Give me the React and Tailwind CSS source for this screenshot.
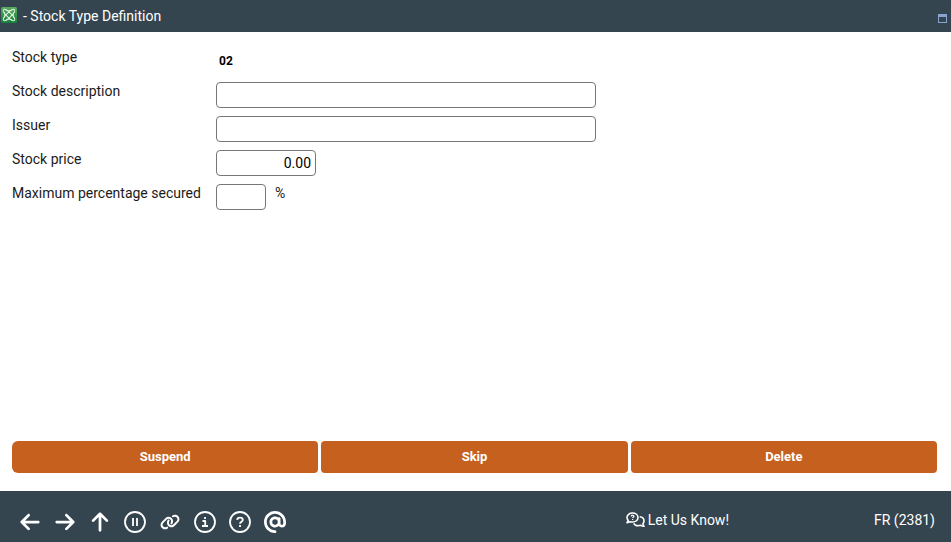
import React, { useState } from 'react';
import { FaArrowLeft, FaArrowRight, FaArrowUp, FaAt, FaLink } from 'react-icons/fa6';

const inputClass = 'block h-[26px] rounded border border-[#767676] bg-white px-1 text-sm text-black';
const labelClass = 'w-[204px] shrink-0 text-sm leading-[18px]';

const FormRow = ({ label, htmlFor, children }) => (
  <div className="flex h-[26px] items-start">
    <label htmlFor={htmlFor} className={labelClass}>{label}</label>
    {children}
  </div>
);

const LogoIcon = () => (
  <svg width="16" height="16" viewBox="0 0 16 16" fill="none" aria-hidden="true">
    <defs>
      <linearGradient id="logo-bg" x1="0" y1="0" x2="0" y2="1">
        <stop offset="0" stopColor="#5cab62" />
        <stop offset="1" stopColor="#15803a" />
      </linearGradient>
    </defs>
    <rect width="16" height="16" rx="1.5" fill="url(#logo-bg)" />
    <g stroke="#e2f4e2" strokeWidth="1">
      <ellipse cx="8" cy="8" rx="7.6" ry="2.2" transform="rotate(45 8 8)" />
      <ellipse cx="8" cy="8" rx="7.6" ry="2.2" transform="rotate(-45 8 8)" />
      <path d="M5 3q3 2 6 0M5 13q3-2 6 0M3 5q2 3 0 6M13 5q-2 3 0 6" />
    </g>
  </svg>
);

const WindowIcon = () => (
  <svg width="9" height="9" viewBox="0 0 9 9" aria-hidden="true">
    <path fill="#8ba3d3" fillRule="evenodd" d="M0 0h9v9H0zM1 3v5h7V3z" />
  </svg>
);

const ChatIcon = () => (
  <svg width="19" height="16" viewBox="0 0 19 16" fill="none" stroke="#fff" strokeWidth="1.6" strokeLinejoin="round" aria-hidden="true">
    <path d="M6.500 1C3.400 1 1 2.900 1 5.500c0 1.200.5 2.200 1.300 3L1 10.700c1.300 0 2.500-.4 3.300-1 .7.200 1.400.3 2.200.3 3.100 0 5.500-1.900 5.500-4.500S9.600 1 6.500 1z" />
    <path d="M13.700 4.800c2.500.2 4.300 1.900 4.300 4.200 0 1.200-.5 2.200-1.200 3l1.200 2.300c-1.300 0-2.400-.4-3.200-1-3 .8-6 0-7.100-2" />
    <path d="M5.200 4.300c.2-1.500 2.700-1.400 2.600.1 0 .8-1.200.8-1.200 1.700M6.600 7v1.100" strokeWidth="1.200" />
  </svg>
);

const CircleIcon = ({ d }) => (
  <svg width="22" height="22" viewBox="0 0 22 22" fill="none" stroke="#fff" strokeWidth="1.8" strokeLinejoin="round" aria-hidden="true">
    <circle cx="11" cy="11" r="10" />
    <path d={d} />
  </svg>
);

const toolbarIcons = [
  { name: 'Back', icon: <FaArrowLeft size={22} /> },
  { name: 'Forward', icon: <FaArrowRight size={22} /> },
  { name: 'Up', icon: <FaArrowUp size={22} /> },
  { name: 'Pause', icon: <CircleIcon d="M9 7v8M13 7v8" /> },
  { name: 'Link', icon: <FaLink size={20} /> },
  { name: 'Information', icon: <CircleIcon d="M8.500 10h2.700v5M8 15h6M11 6v2.100" /> },
  { name: 'Help', icon: <CircleIcon d="M8.200 8.900c.1-3 5.600-3 5.600 0 0 1.800-2.800 1.800-2.800 3.800M11 14v2.100" /> },
  { name: 'Email', icon: <FaAt size={22} /> },
];

const App = () => {
  const [stock, setStock] = useState({ description: '', issuer: '', price: '0.00', percentage: '' });

  const handleChange = (e) => {
    const { name, value } = e.target;
    setStock(prev => ({ ...prev, [name]: value }));
  };

  return (
    <div className="flex min-h-screen flex-col bg-white font-[Roboto,sans-serif] text-[#1b1b1b]">
      <header className="flex h-8 items-center justify-between bg-[#34454f] pr-1 pl-px text-white">
        <div className="flex items-start gap-[6px]">
          <LogoIcon />
          <h1 className="text-sm leading-[18px]">- Stock Type Definition</h1>
        </div>
        <button type="button" aria-label="Maximize" className="pt-1">
          <WindowIcon />
        </button>
      </header>

      <form className="flex grow flex-col" onSubmit={(e) => e.preventDefault()}>
        <div className="flex grow flex-col gap-2 px-3 pt-4">
          <div className="flex h-[26px] items-start">
            <span className={labelClass}>Stock type</span>
            <output className="px-[3px] text-xs leading-[26px] font-bold text-black">02</output>
          </div>
          <FormRow label="Stock description" htmlFor="description">
            <input id="description" name="description" className={`${inputClass} w-[380px]`} value={stock.description} onChange={handleChange} />
          </FormRow>
          <FormRow label="Issuer" htmlFor="issuer">
            <input id="issuer" name="issuer" className={`${inputClass} w-[380px]`} value={stock.issuer} onChange={handleChange} />
          </FormRow>
          <FormRow label="Stock price" htmlFor="price">
            <input id="price" name="price" className={`${inputClass} w-[100px] text-right`} value={stock.price} onChange={handleChange} />
          </FormRow>
          <FormRow label="Maximum percentage secured" htmlFor="percentage">
            <input id="percentage" name="percentage" className={`${inputClass} w-[50px]`} value={stock.percentage} onChange={handleChange} />
            <span className="pl-[9px] text-sm leading-[18px]">%</span>
          </FormRow>
        </div>

        <div className="grid grid-cols-3 gap-[3px] pr-[14px] pb-[18px] pl-3 text-[13px] font-bold text-white">
          <button type="button" className="h-8 rounded rounded-l-md bg-[#c6601e]">Suspend</button>
          <button type="button" className="h-8 rounded bg-[#c6601e]">Skip</button>
          <button type="button" className="h-8 rounded bg-[#c6601e]">Delete</button>
        </div>
      </form>

      <footer className="flex h-[51px] items-center bg-[#34454f] pr-4 pl-[18px] text-sm text-white">
        <nav className="flex grow gap-[11px] pt-[11px]" aria-label="Toolbar">
          {toolbarIcons.map(({ name, icon }) => (
            <button key={name} type="button" aria-label={name} className="flex size-6 items-center justify-center">
              {icon}
            </button>
          ))}
        </nav>
        <a href="#feedback" className="flex items-center gap-[3px] pt-[7px]">
          <ChatIcon />
          Let Us Know!
        </a>
        <span className="w-[206px] pt-[7px] text-right">FR (2381)</span>
      </footer>
    </div>
  );
};

export default App;
